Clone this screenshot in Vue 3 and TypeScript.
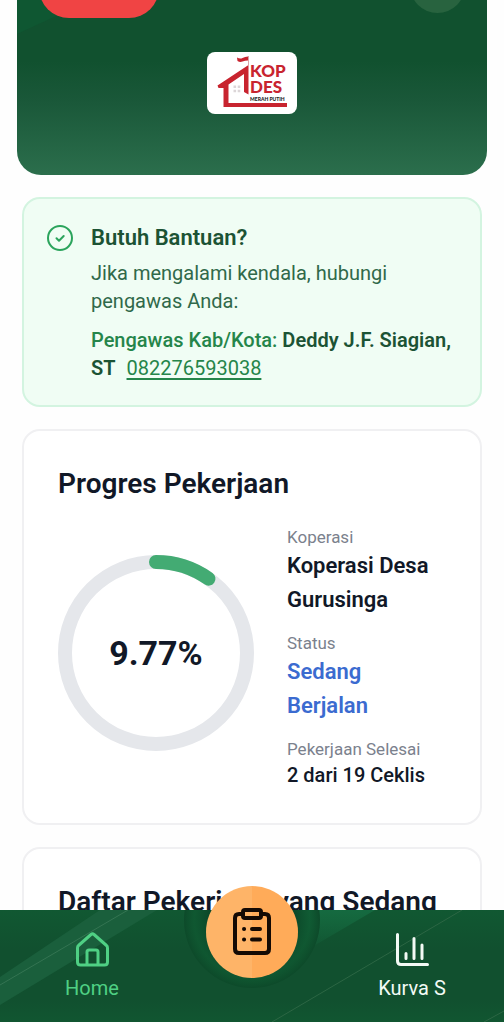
<script setup lang="ts">
import { computed, ref } from 'vue'

interface Detail {
  label: string
  value: string
  tone: 'strong' | 'link' | 'plain'
}

const percent = ref(9.77)
const radius = 91
const circumference = 2 * Math.PI * radius
const dash = computed(() => `${(circumference * percent.value) / 100} ${circumference}`)

const details: Detail[] = [
  { label: 'Koperasi', value: 'Koperasi Desa Gurusinga', tone: 'strong' },
  { label: 'Status', value: 'Sedang Berjalan', tone: 'link' },
  { label: 'Pekerjaan Selesai', value: '2 dari 19 Ceklis', tone: 'plain' },
]
</script>

<template>
  <div class="app">
    <main class="content">
      <header class="hero">
        <svg class="hero-shine" viewBox="0 0 48 34" aria-hidden="true">
          <path d="M0 0H48V12L0 34Z" fill="#0f5732" />
        </svg>
        <div class="toolbar">
          <button class="pill" type="button" aria-label="Keluar"></button>
          <button class="round" type="button" aria-label="Profil"></button>
        </div>
        <svg class="logo" viewBox="0 0 90 62" role="img" aria-label="Kopdes Merah Putih">
          <rect width="90" height="62" rx="8" fill="#fff" />
          <path d="M10.500 33.500 41.500 13V42.500L37 40V22L21.500 32.500V51H80V55H16.500V36H11.500Z" fill="#c8242f" />
          <path d="M41.500 4V14" stroke="#d9a5a8" stroke-width="1" />
          <path d="M30 5.500q3 1.800 5.500 .5t5.500-1.500v4q-3 0-5.500 1t-5-.5z" fill="#c8242f" />
          <path d="M26.500 33.500h2.600v2.600h-2.600zM30.700 33.500h2.600v2.600h-2.600zM26.500 37.700h2.600v2.600h-2.600zM30.700 37.700h2.600v2.600h-2.600z" fill="#dcd6d8" />
          <text x="43" y="25" class="logo-name">KOP</text>
          <text x="43" y="41" class="logo-name">DES</text>
          <text x="43" y="49" class="logo-sub">MERAH PUTIH</text>
        </svg>
      </header>

      <div class="stack">
        <section class="card help">
          <svg class="help-icon" viewBox="0 0 26 26" fill="none" stroke="#2ba45c" stroke-width="2" stroke-linecap="round" stroke-linejoin="round" aria-hidden="true">
            <circle cx="13" cy="13" r="12" />
            <path d="M9.500 13.300 12 15.700 16.700 11" />
          </svg>
          <div class="help-body">
            <h2 class="help-title">Butuh Bantuan?</h2>
            <p class="help-text">Jika mengalami kendala, hubungi pengawas Anda:</p>
            <p class="help-contact">
              <span class="role">Pengawas Kab/Kota:</span>
              <strong class="person"> Deddy J.F. Siagian, ST</strong>
              <a class="phone" href="tel:082276593038">082276593038</a>
            </p>
          </div>
        </section>

        <section class="card panel">
          <h2 class="panel-title">Progres Pekerjaan</h2>
          <div class="progress">
            <div class="ring">
              <svg viewBox="0 0 196 196" fill="none" stroke-width="14" aria-hidden="true">
                <circle cx="98" cy="98" :r="radius" stroke="#e5e7eb" />
                <circle cx="98" cy="98" :r="radius" stroke="#43ab73" stroke-linecap="round" :stroke-dasharray="dash" transform="rotate(-90 98 98)" />
              </svg>
              <span class="ring-value">{{ percent }}%</span>
            </div>
            <dl class="details">
              <div v-for="item in details" :key="item.label">
                <dt>{{ item.label }}</dt>
                <dd :class="item.tone">{{ item.value }}</dd>
              </div>
            </dl>
          </div>
        </section>

        <section class="card panel">
          <h2 class="panel-title">Daftar Pekerjaan yang Sedang</h2>
        </section>
      </div>
    </main>

    <nav class="tabs">
      <svg class="tabs-bg" viewBox="0 0 504 112" preserveAspectRatio="none" aria-hidden="true">
        <defs>
          <linearGradient id="base" x1="0" y1="0" x2="0" y2="1">
            <stop offset="0" stop-color="#115832" />
            <stop offset=".35" stop-color="#11502f" />
            <stop offset=".8" stop-color="#11502f" />
            <stop offset="1" stop-color="#115631" />
          </linearGradient>
          <linearGradient id="fade" x1="0" y1="0" x2="0" y2="1">
            <stop offset="0" stop-color="#156a40" />
            <stop offset="1" stop-color="#156a40" stop-opacity="0" />
          </linearGradient>
          <radialGradient id="notch">
            <stop offset=".65" stop-color="#0c4a2a" />
            <stop offset=".85" stop-color="#0f5831" stop-opacity=".8" />
            <stop offset="1" stop-color="#0d4a2a" />
          </radialGradient>
        </defs>
        <rect width="504" height="112" fill="url(#base)" />
        <path d="M0 67 100 0H157L0 95Z" fill="#1a5f3c" />
        <path d="M0 75 128 0" stroke="#347452" stroke-width="1" />
        <path d="M252 0H375L300 44H252Z" fill="url(#fade)" />
        <path d="M272 112 462 0M484 112 504 101" stroke="#2c6644" stroke-width="1" />
        <circle cx="252" cy="10" r="68" fill="url(#notch)" />
      </svg>
      <a class="tab active" href="#home">
        <svg viewBox="0 0 36 36" fill="none" stroke="currentColor" stroke-width="3" stroke-linecap="round" stroke-linejoin="round" aria-hidden="true">
          <path d="M4.500 14.500Q3.500 15.300 3.500 17V31Q3.500 34 6.500 34H30.500Q33.500 34 33.500 31V17Q33.500 15.300 32.500 14.500L20 3.500Q18.500 2.300 17 3.500ZM13 34V21Q13 19 15 19H22Q24 19 24 21V34" />
        </svg>
        <span>Home</span>
      </a>
      <div class="fab-cell">
        <a class="fab" href="#ceklis" aria-label="Ceklis">
          <svg viewBox="0 0 38 48" fill="none" stroke="#140a04" stroke-width="4" stroke-linecap="round" stroke-linejoin="round" aria-hidden="true">
            <path d="M10 6H6Q2 6 2 10V41Q2 45 6 45H32Q36 45 36 41V10Q36 6 32 6H28" />
            <path d="M12 2H26Q28 2 28 4V8Q28 10 26 10H12Q10 10 10 8V4Q10 2 12 2Z" />
            <path d="M11 21h.1M19 21h8M11 31.500h.1M19 31.500h8" />
          </svg>
        </a>
      </div>
      <a class="tab" href="#kurva-s">
        <svg viewBox="0 0 36 36" fill="none" stroke="currentColor" stroke-width="3" stroke-linecap="round" stroke-linejoin="round" aria-hidden="true">
          <path d="M3.500 3.500V30Q3.500 33.500 7 33.500H33.500M12 22.500V27.500M20 7.500V27.500M28 14V27.500" />
        </svg>
        <span>Kurva S</span>
      </a>
    </nav>
  </div>
</template>

<style>
body {
  margin: 0;
  background: #fefefe;
}
</style>

<style scoped>
.app {
  display: flex;
  flex-direction: column;
  height: 100vh;
  box-sizing: border-box;
  padding-bottom: 2px;
  background: #fefefe;
  font-family: Roboto, "Liberation Sans", sans-serif;
  color: #111827;
}

h2,
p,
dl,
dd {
  margin: 0;
}

.content {
  flex: 1;
  min-height: 0;
  overflow-y: auto;
  scrollbar-width: none;
}

.hero {
  position: relative;
  display: flex;
  flex-direction: column;
  align-items: center;
  overflow: hidden;
  margin: 0 17px;
  padding-bottom: 61px;
  border-radius: 0 0 24px 24px;
  background: linear-gradient(#11512f 35%, #1a5839 58%, #2b6e4c);
}

.hero-shine {
  position: absolute;
  top: 0;
  left: 0;
  width: 48px;
}

.toolbar {
  position: relative;
  display: flex;
  justify-content: space-between;
  align-items: flex-start;
  align-self: stretch;
  margin-top: -42px;
  padding: 0 22px 34px;
}

.pill,
.round {
  border: 0;
  padding: 0;
}

.pill {
  width: 120px;
  height: 60px;
  border-radius: 30px;
  background: #f04444;
}

.round {
  width: 55px;
  height: 55px;
  border-radius: 50%;
  background: #28633f;
}

.logo {
  width: 90px;
  height: 62px;
}

.logo-name {
  font: 900 17px Lato, sans-serif;
  fill: #c8242f;
}

.logo-sub {
  font: 900 5px Lato, sans-serif;
  fill: #222;
}

.stack {
  display: flex;
  flex-direction: column;
  gap: 22px;
  padding: 22px 22px 24px;
}

.card {
  border: 2px solid #f0f0f2;
  border-radius: 18px;
  background: #fff;
}

.help {
  display: flex;
  gap: 18px;
  padding: 22px 22px 23px 23px;
  border-color: #d3f4e0;
  background: #f0fdf4;
}

.help-icon {
  flex: none;
  width: 26px;
  height: 26px;
  margin-top: 4px;
}

.help-title {
  font-size: 22px;
  line-height: 34px;
  font-weight: 600;
  color: #1c5334;
}

.help-text {
  margin-top: 4px;
  font-size: 20px;
  line-height: 28px;
  color: #30694a;
}

.help-contact {
  margin-top: 11px;
  font-size: 20px;
  line-height: 28px;
}

.role {
  font-weight: 500;
  color: #25854a;
}

.person {
  font-weight: 600;
  color: #1c5334;
}

.phone {
  margin-left: 11px;
  color: #25854a;
  text-underline-offset: 3px;
}

.panel {
  padding: 34px;
}

.panel-title {
  font-size: 28px;
  line-height: 38px;
  font-weight: 600;
}

.progress {
  display: flex;
  align-items: center;
  gap: 33px;
  margin-top: 23px;
}

.ring {
  flex: none;
  display: grid;
  place-items: center;
  width: 196px;
  margin-bottom: 10px;
}

.ring > * {
  grid-area: 1 / 1;
}

.ring svg {
  width: 100%;
}

.ring-value {
  font-size: 34px;
  line-height: 40px;
  font-weight: 700;
}

.details {
  flex: 1;
  min-width: 0;
  display: flex;
  flex-direction: column;
  gap: 15px;
}

dt {
  font-size: 17px;
  line-height: 23px;
  color: #7b818d;
}

dd {
  font-size: 22px;
  line-height: 34px;
  font-weight: 600;
}

dd.link {
  color: #3b6bd0;
}

dd.plain {
  font-size: 20px;
  line-height: 28px;
  font-weight: 500;
}

.tabs {
  position: relative;
  display: grid;
  grid-template-columns: repeat(3, 1fr);
  height: 112px;
  padding: 0 12px;
}

.tabs-bg {
  position: absolute;
  inset: 0;
  width: 100%;
  height: 100%;
}

.tab {
  position: relative;
  display: flex;
  flex-direction: column;
  align-items: center;
  gap: 7px;
  padding-top: 21px;
  font-size: 20px;
  line-height: 28px;
  color: #f3faf5;
  text-decoration: none;
}

.tab.active {
  color: #4fd084;
}

.tab svg {
  width: 36px;
  height: 36px;
}

.fab-cell {
  position: relative;
}

.fab {
  position: absolute;
  top: -24px;
  left: calc(50% - 46px);
  display: grid;
  place-items: center;
  width: 92px;
  height: 92px;
  border-radius: 50%;
  background: linear-gradient(90deg, #feb468 50%, #ffab59 50%);
}

.fab svg {
  width: 38px;
  height: 48px;
}
</style>
